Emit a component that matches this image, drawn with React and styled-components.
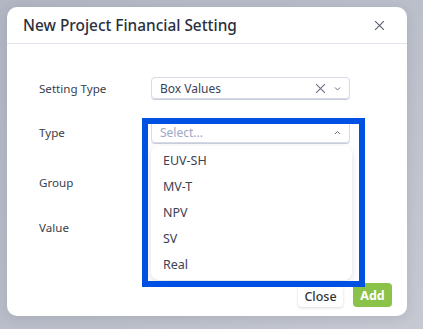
import React from 'react';
import styled, { createGlobalStyle } from 'styled-components';

const GlobalStyle = createGlobalStyle`
  html, body {
    margin: 0;
    padding: 0;
    height: 100%;
  }
  body {
    background: linear-gradient(135deg, #b2b6c3 0%, #bcc0cb 60%, #c6c9d2 100%);
    font-family: "Noto Sans", "Open Sans", sans-serif;
    overflow: hidden;
  }
`;

const Page = styled.div`
  padding: 7px;
  height: 329px;
  box-sizing: border-box;
`;

const Modal = styled.div`
  position: relative;
  width: 400px;
  height: 309px;
  background: #fff;
  border-radius: 10px;
  display: flex;
  flex-direction: column;
  box-shadow: 0 2px 12px rgba(40, 45, 60, 0.12);
`;

const Header = styled.div`
  height: 36px;
  display: flex;
  align-items: center;
  justify-content: space-between;
  padding: 0 22px 0 16px;
  border-bottom: 1px solid #e3e5ee;
`;

const Title = styled.h2`
  margin: 0;
  font-size: 15.4px;
  font-weight: 500;
  color: #2a2f3e;
`;

const IconButton = styled.button`
  border: none;
  background: none;
  padding: 0;
  display: flex;
  color: #5a5f70;
`;

const Body = styled.div`
  flex: 1;
  padding: 33px 0 0 32px;
`;

const Row = styled.div`
  display: flex;
  align-items: center;
  height: 22px;
  margin-top: ${(p) => p.$gap || 0}px;
`;

const Label = styled.div`
  width: 112px;
  font-size: 11.6px;
  color: #3a3e4a;
`;

const SelectBox = styled.div`
  position: relative;
  width: 199px;
  height: 22px;
  box-sizing: border-box;
  border: 1px solid #d7dbe8;
  border-radius: 4px;
  box-shadow: 0 1px 0 #c9cedd;
  display: flex;
  align-items: center;
  padding: 0 8px;
  font-size: 12px;
  color: ${(p) => (p.$placeholder ? '#a0a8c2' : '#3b4258')};
`;

const SelectText = styled.span`
  flex: 1;
`;

const Icons = styled.span`
  display: flex;
  align-items: center;
  gap: 8px;
  color: #6a7085;
`;

const Menu = styled.div`
  position: absolute;
  top: 24px;
  left: -1px;
  width: 201px;
  height: 134px;
  box-sizing: border-box;
  background: #fff;
  border-radius: 8px;
  box-shadow: 0 2px 6px rgba(60, 70, 100, 0.18);
  padding-top: 1px;
  z-index: 2;
`;

const MenuItem = styled.div`
  height: 26px;
  display: flex;
  align-items: center;
  padding-left: 12px;
  font-size: 12.5px;
  color: #3b4256;
`;

const Highlight = styled.div`
  position: absolute;
  left: 135px;
  top: 111px;
  width: 223px;
  height: 169px;
  box-sizing: border-box;
  border: 6px solid #0050e3;
  z-index: 3;
  pointer-events: none;
`;

const Footer = styled.div`
  display: flex;
  justify-content: flex-end;
  align-items: flex-end;
  gap: 10px;
  padding: 0 15px 9px 0;
`;

const Button = styled.button`
  font-family: "Noto Sans", "Open Sans", sans-serif;
  font-size: 12.5px;
  border: none;
  border-radius: 4px;
  padding: 0;
  width: ${(p) => p.$w}px;
  height: ${(p) => p.$hgt}px;
  background: ${(p) => (p.$primary ? '#8bc34a' : '#fff')};
  color: ${(p) => (p.$primary ? '#fff' : '#333')};
  font-weight: ${(p) => (p.$primary ? 700 : 500)};
  box-shadow: ${(p) => (p.$primary ? 'none' : '0 1px 3px rgba(0,0,0,0.15)')};
`;

const XIcon = ({ size }) => (
  <svg width={size} height={size} viewBox="0 0 10 10" fill="none" stroke="currentColor" strokeWidth="1">
    <path d="M1 1L9 9M9 1L1 9" />
  </svg>
);

const Chevron = ({ up }) => (
  <svg width="7" height="5" viewBox="0 0 7 5" fill="none" stroke="currentColor" strokeWidth="1">
    <path d={up ? 'M1 4L3.5 1.5L6 4' : 'M1 1.5L3.5 4L6 1.5'} />
  </svg>
);

const options = ['EUV-SH', 'MV-T', 'NPV', 'SV', 'Real'];

export default function App() {
  return (
    <Page>
      <GlobalStyle />
      <Modal>
        <Header>
          <Title>New Project Financial Setting</Title>
          <IconButton>
            <XIcon size={11} />
          </IconButton>
        </Header>
        <Body>
          <Row>
            <Label>Setting Type</Label>
            <SelectBox>
              <SelectText>Box Values</SelectText>
              <Icons>
                <XIcon size={11} />
                <Chevron />
              </Icons>
            </SelectBox>
          </Row>
          <Row $gap={22}>
            <Label>Type</Label>
            <SelectBox $placeholder>
              <SelectText>Select...</SelectText>
              <Icons>
                <Chevron up />
              </Icons>
              <Menu>
                {options.map((o) => (
                  <MenuItem key={o}>{o}</MenuItem>
                ))}
              </Menu>
            </SelectBox>
          </Row>
          <Row $gap={28}>
            <Label>Group</Label>
          </Row>
          <Row $gap={23}>
            <Label>Value</Label>
          </Row>
        </Body>
        <Footer>
          <Button $w={45} $hgt={21}>Close</Button>
          <Button $primary $w={39} $hgt={24}>Add</Button>
        </Footer>
        <Highlight />
      </Modal>
    </Page>
  );
}
